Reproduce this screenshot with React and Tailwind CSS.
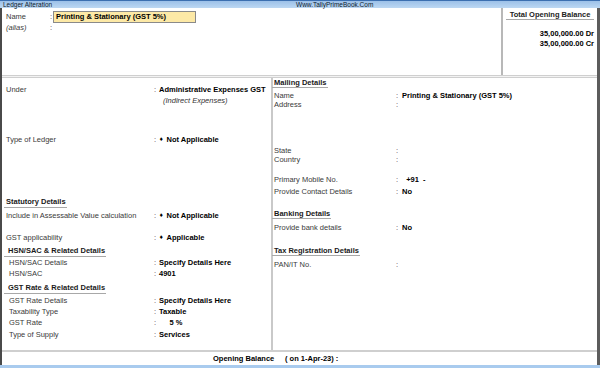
import React from "react";

function LRow({ label, value, cls = "", sub = false, valueCls = "" }) {
  return (
    <div className={"flex h-[11px] leading-[11px] " + cls}>
      <span className={"text-[#3a3a3a] shrink-0 " + (sub ? "w-[145px] pl-[3px] box-content" : "w-[148px]")}>{label}</span>
      <span className="w-[5px] shrink-0 text-[#3a3a3a]">:</span>
      <span className={"font-bold text-black whitespace-pre " + valueCls}>{value}</span>
    </div>
  );
}

function RRow({ label, value, cls = "" }) {
  return (
    <div className={"flex h-[9px] leading-[9px] " + cls}>
      <span className="w-[122px] shrink-0 text-[#3a3a3a]">{label}</span>
      <span className="w-[6px] shrink-0 text-[#3a3a3a]">:</span>
      <span className="font-bold text-black whitespace-pre">{value}</span>
    </div>
  );
}

function Diamond() {
  return <span className="font-['DejaVu_Sans'] text-[5px] align-[1px] mr-[3px]">♦</span>;
}

export default function App() {
  return (
    <div className="w-[600px] h-[368px] bg-white flex flex-col overflow-hidden font-['Liberation_Sans',Arial,sans-serif] text-[7.5px] text-black">
      {/* title bar */}
      <div className="h-[8px] shrink-0 flex items-center bg-gradient-to-b from-[#9cc0e8] to-[#bcd8f3] border-t border-[#3c6fb0] text-[6.5px] leading-[7px] text-[#0d1b2e]">
        <span className="w-[296px] pl-[3px] shrink-0">Ledger Alteration</span>
        <span>Www.TallyPrimeBook.Com</span>
      </div>

      {/* frame */}
      <div className="h-[357px] shrink-0 flex flex-col border-l-2 border-r-[3px] border-l-[#4a4a4a] border-r-[#5c5c5c]">
        {/* top section */}
        <div className="h-[67px] shrink-0 flex">
          <div className="flex-1 pl-[4px] pt-[3px] flex flex-col">
            <div className="flex h-[12px] items-center">
              <span className="w-[44px] shrink-0 text-[#3a3a3a]">Name</span>
              <span className="w-[3px] shrink-0 text-[#3a3a3a]">:</span>
              <div className="w-[143px] h-[12px] bg-[#fde9a6] border border-[#8a8a8a] pl-[2px] flex items-center font-bold">
                Printing &amp; Stationary (GST 5%)
              </div>
            </div>
            <div className="flex h-[9px] leading-[9px]">
              <span className="w-[44px] shrink-0 italic text-[#3a3a3a]">(alias)</span>
              <span className="text-[#3a3a3a]">:</span>
            </div>
          </div>
          <div className="w-[96px] shrink-0 border-l-2 border-[#b8b8b8] flex flex-col">
            <div className="mt-[2px] mx-[3px] leading-[9px] border-b border-[#a8a8a8] text-center font-bold text-[#222]">
              Total Opening Balance
            </div>
            <div className="mt-[9px] pr-[3px] text-right leading-[10px] font-bold">35,00,000.00 Dr</div>
            <div className="pr-[3px] text-right leading-[10px] font-bold">35,00,000.00 Cr</div>
          </div>
        </div>

        {/* separator */}
        <div className="h-[3px] shrink-0 border-t border-b border-[#cfcfcf] bg-[#f2f2f2]"></div>

        {/* body */}
        <div className="h-[272px] shrink-0 flex">
          {/* left column */}
          <div className="w-[271px] shrink-0 border-r-2 border-[#c9c9c9] pl-[4px] pt-[6px] flex flex-col">
            <LRow label="Under" value="Administrative Expenses GST" />
            <div className="h-[11px] leading-[11px] pl-[157px] italic text-[#333]">(Indirect Expenses)</div>
            <LRow cls="mt-[28px]" label="Type of Ledger" value={<><Diamond />Not Applicable</>} />
            <div className="mt-[52px] h-[11px] leading-[10px]">
              <span className="inline-block -ml-[2px] pl-[2px] pr-[1px] border-b border-[#a8a8a8] font-bold text-[#1a1a1a]">Statutory Details</span>
            </div>
            <LRow cls="mt-[2px]" label="Include in Assessable Value calculation" value={<><Diamond />Not Applicable</>} />
            <LRow cls="mt-[11px]" label="GST applicability" value={<><Diamond />Applicable</>} />
            <div className="mt-[3px] h-[11px] leading-[10px]">
              <span className="inline-block -ml-[2px] pl-[4px] pr-[1px] border-b border-[#a8a8a8] font-bold text-[#1a1a1a]">HSN/SAC &amp; Related Details</span>
            </div>
            <LRow sub label="HSN/SAC Details" value="Specify Details Here" />
            <LRow sub label="HSN/SAC" value="4901" />
            <div className="mt-[4px] h-[11px] leading-[10px]">
              <span className="inline-block -ml-[2px] pl-[4px] pr-[1px] border-b border-[#a8a8a8] font-bold text-[#1a1a1a]">GST Rate &amp; Related Details</span>
            </div>
            <LRow sub cls="mt-[1px]" label="GST Rate Details" value="Specify Details Here" />
            <LRow sub label="Taxability Type" value="Taxable" />
            <LRow sub label="GST Rate" value="     5 %" />
            <LRow sub cls="mt-[1px]" label="Type of Supply" value="Services" />
          </div>

          {/* right column */}
          <div className="flex-1 pl-[1px] flex flex-col">
            <div className="h-[10px] leading-[9px]">
              <span className="inline-block -ml-[2px] pl-[2px] pr-[1px] border-b border-[#a8a8a8] font-bold text-[#1a1a1a]">Mailing Details</span>
            </div>
            <RRow cls="mt-[3px]" label="Name" value="Printing & Stationary (GST 5%)" />
            <RRow label="Address" value="" />
            <RRow cls="mt-[37px]" label="State" value="" />
            <RRow label="Country" value="" />
            <RRow cls="mt-[11px]" label="Primary Mobile No." value="  +91  -" />
            <RRow cls="mt-[3px]" label="Provide Contact Details" value="No" />
            <div className="mt-[13px] h-[10px] leading-[9px]">
              <span className="inline-block -ml-[2px] pl-[2px] pr-[1px] border-b border-[#a8a8a8] font-bold text-[#1a1a1a]">Banking Details</span>
            </div>
            <RRow cls="mt-[4px]" label="Provide bank details" value="No" />
            <div className="mt-[14px] h-[10px] leading-[9px]">
              <span className="inline-block -ml-[2px] pl-[2px] pr-[1px] border-b border-[#a8a8a8] font-bold text-[#1a1a1a]">Tax Registration Details</span>
            </div>
            <RRow cls="mt-[4px]" label="PAN/IT No." value="" />
          </div>
        </div>

        {/* separator */}
        <div className="h-[2px] shrink-0 border-t border-b border-[#cfcfcf]"></div>

        {/* bottom row */}
        <div className="h-[13px] shrink-0 flex items-center pl-[211px] font-bold">
          <span className="w-[72px] shrink-0">Opening Balance</span>
          <span>( on 1-Apr-23)  :</span>
        </div>
      </div>

      {/* bottom line */}
      <div className="h-[3px] shrink-0 bg-[#a9cbee]"></div>
    </div>
  );
}
